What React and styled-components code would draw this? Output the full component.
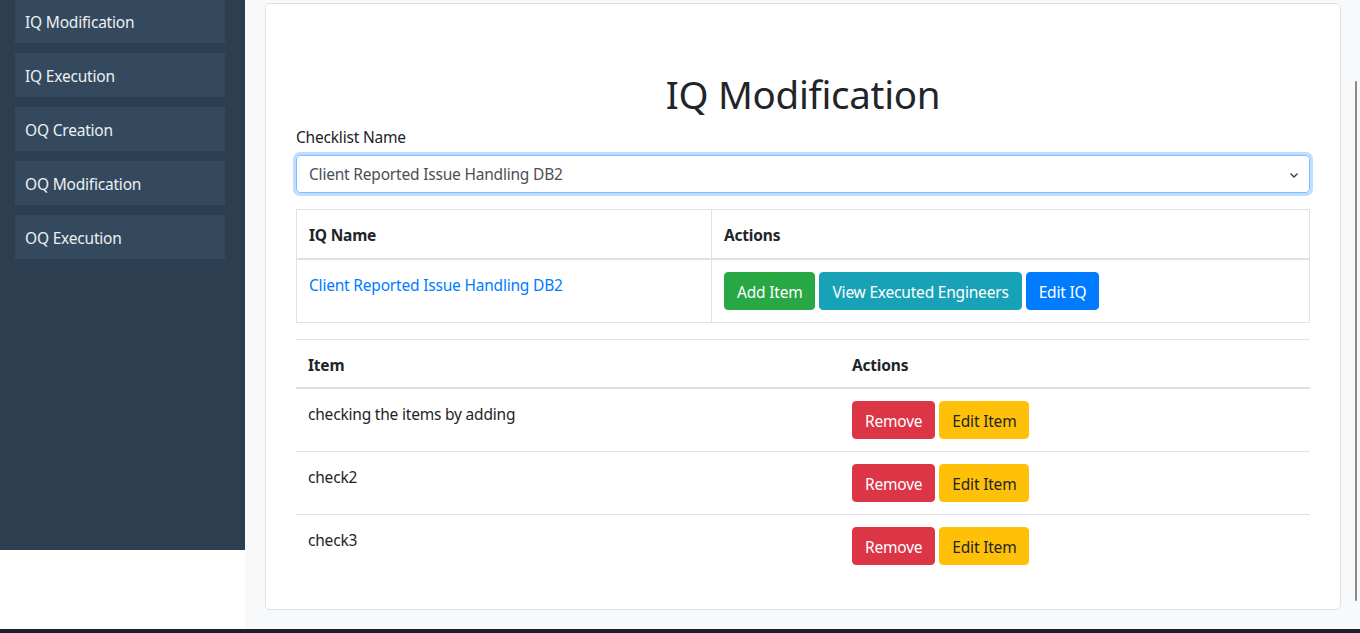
import React from "react";
import styled, { createGlobalStyle } from "styled-components";

const Global = createGlobalStyle`
  * { box-sizing: border-box; }
  html, body { margin: 0; padding: 0; background: #fff; }
  body {
    font-family: "Noto Sans", "Open Sans", "Liberation Sans", sans-serif;
    font-size: 16px;
    line-height: 1.5;
    color: #212529;
    overflow: hidden;
  }
`;

const Layout = styled.div`
  display: flex;
  height: 629px;
  overflow: hidden;
`;

const Sidebar = styled.aside`
  width: 245px;
  flex: 0 0 245px;
  height: 550px;
  background: #2c3e50;
  padding: 0 20px 0 15px;
`;

const NavList = styled.ul`
  list-style: none;
  margin: -1px 0 0;
  padding: 0;
  display: flex;
  flex-direction: column;
  gap: 10px;
`;

const NavItem = styled.li`
  height: 44px;
  background: #34495e;
  color: #ecf0f1;
  padding: 3px 10px 0;
  display: flex;
  align-items: center;
  font-size: 15.5px;
  letter-spacing: -0.2px;
`;

const Main = styled.main`
  flex: 1;
  background: #f8f9fa;
  padding: 3px 19px 0 20px;
`;

const Card = styled.section`
  background: #fff;
  border: 1px solid #dee2e6;
  border-radius: 5px;
  padding: 66px 30px 32px 30px;
`;

const Title = styled.h1`
  margin: 0 0 8px;
  text-align: center;
  font-size: 38.5px;
  font-weight: 400;
  line-height: 1.25;
  letter-spacing: -0.3px;
`;

const FormGroup = styled.div`
  margin-bottom: 16px;
`;

const Label = styled.label`
  display: block;
  margin-bottom: 6px;
  font-size: 15.5px;
  letter-spacing: -0.2px;
`;

const SelectBox = styled.div`
  height: 38px;
  border: 1px solid #80bdff;
  border-radius: 4px;
  box-shadow: 0 0 0 3px rgba(0, 123, 255, 0.25);
  display: flex;
  align-items: center;
  justify-content: space-between;
  padding: 1px 10px 0 12px;
  color: #495057;
  font-size: 15.5px;
  letter-spacing: -0.2px;
`;

const Chevron = styled.svg`
  width: 10px;
  height: 10px;
`;

const Table = styled.table`
  width: 100%;
  border-collapse: collapse;
  margin-bottom: ${(p) => (p.$last ? "0" : "16px")};
  table-layout: fixed;
`;

const Th = styled.th`
  text-align: left;
  font-weight: 700;
  padding: 14px 12px 10px;
  vertical-align: bottom;
  border-top: 1px solid #dee2e6;
  border-bottom: 2px solid #dee2e6;
  border-left: ${(p) => (p.$bordered ? "1px solid #dee2e6" : "none")};
  border-right: ${(p) => (p.$bordered ? "1px solid #dee2e6" : "none")};
  font-size: 15.5px;
  letter-spacing: -0.2px;
`;

const Td = styled.td`
  padding: 12px;
  vertical-align: top;
  border-top: 1px solid #dee2e6;
  border-bottom: ${(p) => (p.$bordered ? "1px solid #dee2e6" : "none")};
  border-left: ${(p) => (p.$bordered ? "1px solid #dee2e6" : "none")};
  border-right: ${(p) => (p.$bordered ? "1px solid #dee2e6" : "none")};
  font-size: 15.5px;
  letter-spacing: -0.2px;
`;

const CellText = styled.div`
  padding-top: 2px;
`;

const Link = styled.a`
  color: #007bff;
  text-decoration: none;
`;

const Actions = styled.div`
  display: flex;
  gap: 4px;
`;

const variants = {
  success: { bg: "#28a745", fg: "#fff" },
  info: { bg: "#17a2b8", fg: "#fff" },
  primary: { bg: "#007bff", fg: "#fff" },
  danger: { bg: "#dc3545", fg: "#fff" },
  warning: { bg: "#ffc107", fg: "#212529" },
};

const Button = styled.button`
  height: 38px;
  padding: 3px 12px 0;
  border: 1px solid ${(p) => variants[p.$v].bg};
  border-radius: 4px;
  background: ${(p) => variants[p.$v].bg};
  color: ${(p) => variants[p.$v].fg};
  font-family: inherit;
  font-size: 15.5px;
  letter-spacing: -0.2px;
  line-height: 1.5;
  cursor: pointer;
`;

const Scrollbar = styled.div`
  position: fixed;
  right: 3px;
  top: 81px;
  width: 2px;
  height: 520px;
  background: #8a8a8a;
  border-radius: 1px;
`;

const Taskbar = styled.div`
  position: fixed;
  left: 0;
  right: 0;
  bottom: 0;
  height: 4px;
  background: #1f1f2b;
`;

const navItems = ["IQ Modification", "IQ Execution", "OQ Creation", "OQ Modification", "OQ Execution"];
const items = ["checking the items by adding", "check2", "check3"];

export default function App() {
  return (
    <>
      <Global />
      <Layout>
        <Sidebar>
          <NavList>
            {navItems.map((n) => (
              <NavItem key={n}>{n}</NavItem>
            ))}
          </NavList>
        </Sidebar>
        <Main>
          <Card>
            <Title>IQ Modification</Title>
            <FormGroup>
              <Label>Checklist Name</Label>
              <SelectBox>
                <span>Client Reported Issue Handling DB2</span>
                <Chevron viewBox="0 0 10 10">
                  <path d="M1.5 3.5 L5 7 L8.5 3.5" fill="none" stroke="#343a40" strokeWidth="1.3" />
                </Chevron>
              </SelectBox>
            </FormGroup>
            <Table>
              <colgroup>
                <col style={{ width: "415px" }} />
                <col />
              </colgroup>
              <thead>
                <tr>
                  <Th $bordered>IQ Name</Th>
                  <Th $bordered>Actions</Th>
                </tr>
              </thead>
              <tbody>
                <tr>
                  <Td $bordered>
                    <CellText>
                      <Link href="#">Client Reported Issue Handling DB2</Link>
                    </CellText>
                  </Td>
                  <Td $bordered>
                    <Actions>
                      <Button $v="success">Add Item</Button>
                      <Button $v="info">View Executed Engineers</Button>
                      <Button $v="primary">Edit IQ</Button>
                    </Actions>
                  </Td>
                </tr>
              </tbody>
            </Table>
            <Table $last>
              <colgroup>
                <col style={{ width: "544px" }} />
                <col />
              </colgroup>
              <thead>
                <tr>
                  <Th>Item</Th>
                  <Th>Actions</Th>
                </tr>
              </thead>
              <tbody>
                {items.map((it) => (
                  <tr key={it}>
                    <Td>
                      <CellText>{it}</CellText>
                    </Td>
                    <Td>
                      <Actions>
                        <Button $v="danger">Remove</Button>
                        <Button $v="warning">Edit Item</Button>
                      </Actions>
                    </Td>
                  </tr>
                ))}
              </tbody>
            </Table>
          </Card>
        </Main>
      </Layout>
      <Scrollbar />
      <Taskbar />
    </>
  );
}
